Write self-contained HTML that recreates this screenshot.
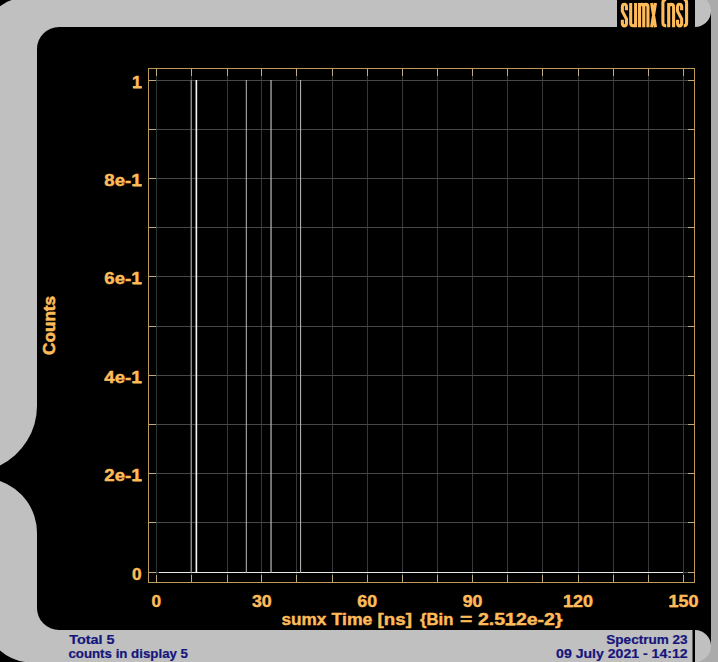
<!DOCTYPE html>
<html><head><meta charset="utf-8"><title>sumx (ns)</title>
<style>html,body{margin:0;padding:0;background:#000;}body{width:718px;height:662px;overflow:hidden;font-family:"Liberation Sans",sans-serif;}svg{display:block;}</style>
</head><body>
<svg width="718" height="662" viewBox="0 0 718 662" shape-rendering="auto">
<rect width="718" height="662" fill="#000"/>
<rect x="711" y="0" width="7" height="662" fill="#ababab"/>
<path d="M11.7,0 L617,0 L617,27 L59,27 A22,22 0 0 0 37,49 L37,405.6 A67,67 0 0 1 0,465.6 L0,6.3 A30,30 0 0 1 11.7,0 Z" fill="#c0c0c0"/>
<path d="M0,481 A55,55 0 0 1 37,533 L37,608 A22,22 0 0 0 59,630 L692.5,630 L692.5,662 L25,662 A48,48 0 0 1 0,650.5 Z" fill="#c0c0c0"/>
<rect x="695" y="0" width="23" height="12.5" fill="#ababab"/>
<rect x="695" y="645" width="23" height="17" fill="#ababab"/>
<path d="M695,-5 A16,16 0 0 1 695,27 Z" fill="#c0c0c0"/>
<path d="M695,630 A16,16 0 0 1 695,662 Z" fill="#c0c0c0"/>
<line x1="156.5" y1="68" x2="156.5" y2="582" stroke="#2a3434" stroke-width="1"/>
<line x1="191.5" y1="68" x2="191.5" y2="582" stroke="#383838" stroke-width="1"/>
<line x1="227.5" y1="68" x2="227.5" y2="582" stroke="#383838" stroke-width="1"/>
<line x1="261.5" y1="68" x2="261.5" y2="582" stroke="#383838" stroke-width="1"/>
<line x1="296.5" y1="68" x2="296.5" y2="582" stroke="#383838" stroke-width="1"/>
<line x1="332.5" y1="68" x2="332.5" y2="582" stroke="#383838" stroke-width="1"/>
<line x1="367.5" y1="68" x2="367.5" y2="582" stroke="#383838" stroke-width="1"/>
<line x1="402.5" y1="68" x2="402.5" y2="582" stroke="#383838" stroke-width="1"/>
<line x1="437.5" y1="68" x2="437.5" y2="582" stroke="#383838" stroke-width="1"/>
<line x1="472.5" y1="68" x2="472.5" y2="582" stroke="#383838" stroke-width="1"/>
<line x1="507.5" y1="68" x2="507.5" y2="582" stroke="#383838" stroke-width="1"/>
<line x1="542.5" y1="68" x2="542.5" y2="582" stroke="#383838" stroke-width="1"/>
<line x1="578.5" y1="68" x2="578.5" y2="582" stroke="#383838" stroke-width="1"/>
<line x1="613.5" y1="68" x2="613.5" y2="582" stroke="#383838" stroke-width="1"/>
<line x1="648.5" y1="68" x2="648.5" y2="582" stroke="#383838" stroke-width="1"/>
<line x1="683.5" y1="68" x2="683.5" y2="582" stroke="#383838" stroke-width="1"/>
<line x1="148" y1="80.5" x2="694" y2="80.5" stroke="#474747" stroke-width="1"/>
<line x1="148" y1="129.5" x2="694" y2="129.5" stroke="#474747" stroke-width="1"/>
<line x1="148" y1="178.5" x2="694" y2="178.5" stroke="#474747" stroke-width="1"/>
<line x1="148" y1="227.5" x2="694" y2="227.5" stroke="#474747" stroke-width="1"/>
<line x1="148" y1="276.5" x2="694" y2="276.5" stroke="#474747" stroke-width="1"/>
<line x1="148" y1="326.5" x2="694" y2="326.5" stroke="#474747" stroke-width="1"/>
<line x1="148" y1="375.5" x2="694" y2="375.5" stroke="#474747" stroke-width="1"/>
<line x1="148" y1="424.5" x2="694" y2="424.5" stroke="#474747" stroke-width="1"/>
<line x1="148" y1="473.5" x2="694" y2="473.5" stroke="#474747" stroke-width="1"/>
<line x1="148" y1="522.5" x2="694" y2="522.5" stroke="#474747" stroke-width="1"/>
<line x1="148" y1="572.5" x2="694" y2="572.5" stroke="#474747" stroke-width="1"/>
<line x1="156.5" y1="69" x2="156.5" y2="76" stroke="#bcab80" stroke-width="1"/>
<line x1="156.5" y1="575" x2="156.5" y2="582" stroke="#bcab80" stroke-width="1"/>
<line x1="191.5" y1="69" x2="191.5" y2="76" stroke="#bcab80" stroke-width="1"/>
<line x1="191.5" y1="575" x2="191.5" y2="582" stroke="#bcab80" stroke-width="1"/>
<line x1="227.5" y1="69" x2="227.5" y2="76" stroke="#bcab80" stroke-width="1"/>
<line x1="227.5" y1="575" x2="227.5" y2="582" stroke="#bcab80" stroke-width="1"/>
<line x1="261.5" y1="69" x2="261.5" y2="76" stroke="#bcab80" stroke-width="1"/>
<line x1="261.5" y1="575" x2="261.5" y2="582" stroke="#bcab80" stroke-width="1"/>
<line x1="296.5" y1="69" x2="296.5" y2="76" stroke="#bcab80" stroke-width="1"/>
<line x1="296.5" y1="575" x2="296.5" y2="582" stroke="#bcab80" stroke-width="1"/>
<line x1="332.5" y1="69" x2="332.5" y2="76" stroke="#bcab80" stroke-width="1"/>
<line x1="332.5" y1="575" x2="332.5" y2="582" stroke="#bcab80" stroke-width="1"/>
<line x1="367.5" y1="69" x2="367.5" y2="76" stroke="#bcab80" stroke-width="1"/>
<line x1="367.5" y1="575" x2="367.5" y2="582" stroke="#bcab80" stroke-width="1"/>
<line x1="402.5" y1="69" x2="402.5" y2="76" stroke="#bcab80" stroke-width="1"/>
<line x1="402.5" y1="575" x2="402.5" y2="582" stroke="#bcab80" stroke-width="1"/>
<line x1="437.5" y1="69" x2="437.5" y2="76" stroke="#bcab80" stroke-width="1"/>
<line x1="437.5" y1="575" x2="437.5" y2="582" stroke="#bcab80" stroke-width="1"/>
<line x1="472.5" y1="69" x2="472.5" y2="76" stroke="#bcab80" stroke-width="1"/>
<line x1="472.5" y1="575" x2="472.5" y2="582" stroke="#bcab80" stroke-width="1"/>
<line x1="507.5" y1="69" x2="507.5" y2="76" stroke="#bcab80" stroke-width="1"/>
<line x1="507.5" y1="575" x2="507.5" y2="582" stroke="#bcab80" stroke-width="1"/>
<line x1="542.5" y1="69" x2="542.5" y2="76" stroke="#bcab80" stroke-width="1"/>
<line x1="542.5" y1="575" x2="542.5" y2="582" stroke="#bcab80" stroke-width="1"/>
<line x1="578.5" y1="69" x2="578.5" y2="76" stroke="#bcab80" stroke-width="1"/>
<line x1="578.5" y1="575" x2="578.5" y2="582" stroke="#bcab80" stroke-width="1"/>
<line x1="613.5" y1="69" x2="613.5" y2="76" stroke="#bcab80" stroke-width="1"/>
<line x1="613.5" y1="575" x2="613.5" y2="582" stroke="#bcab80" stroke-width="1"/>
<line x1="648.5" y1="69" x2="648.5" y2="76" stroke="#bcab80" stroke-width="1"/>
<line x1="648.5" y1="575" x2="648.5" y2="582" stroke="#bcab80" stroke-width="1"/>
<line x1="683.5" y1="69" x2="683.5" y2="76" stroke="#bcab80" stroke-width="1"/>
<line x1="683.5" y1="575" x2="683.5" y2="582" stroke="#bcab80" stroke-width="1"/>
<line x1="149" y1="80.5" x2="156" y2="80.5" stroke="#bcab80" stroke-width="1"/>
<line x1="688" y1="80.5" x2="694" y2="80.5" stroke="#bcab80" stroke-width="1"/>
<line x1="149" y1="129.5" x2="156" y2="129.5" stroke="#bcab80" stroke-width="1"/>
<line x1="688" y1="129.5" x2="694" y2="129.5" stroke="#bcab80" stroke-width="1"/>
<line x1="149" y1="178.5" x2="156" y2="178.5" stroke="#bcab80" stroke-width="1"/>
<line x1="688" y1="178.5" x2="694" y2="178.5" stroke="#bcab80" stroke-width="1"/>
<line x1="149" y1="227.5" x2="156" y2="227.5" stroke="#bcab80" stroke-width="1"/>
<line x1="688" y1="227.5" x2="694" y2="227.5" stroke="#bcab80" stroke-width="1"/>
<line x1="149" y1="276.5" x2="156" y2="276.5" stroke="#bcab80" stroke-width="1"/>
<line x1="688" y1="276.5" x2="694" y2="276.5" stroke="#bcab80" stroke-width="1"/>
<line x1="149" y1="326.5" x2="156" y2="326.5" stroke="#bcab80" stroke-width="1"/>
<line x1="688" y1="326.5" x2="694" y2="326.5" stroke="#bcab80" stroke-width="1"/>
<line x1="149" y1="375.5" x2="156" y2="375.5" stroke="#bcab80" stroke-width="1"/>
<line x1="688" y1="375.5" x2="694" y2="375.5" stroke="#bcab80" stroke-width="1"/>
<line x1="149" y1="424.5" x2="156" y2="424.5" stroke="#bcab80" stroke-width="1"/>
<line x1="688" y1="424.5" x2="694" y2="424.5" stroke="#bcab80" stroke-width="1"/>
<line x1="149" y1="473.5" x2="156" y2="473.5" stroke="#bcab80" stroke-width="1"/>
<line x1="688" y1="473.5" x2="694" y2="473.5" stroke="#bcab80" stroke-width="1"/>
<line x1="149" y1="522.5" x2="156" y2="522.5" stroke="#bcab80" stroke-width="1"/>
<line x1="688" y1="522.5" x2="694" y2="522.5" stroke="#bcab80" stroke-width="1"/>
<line x1="149" y1="572.5" x2="156" y2="572.5" stroke="#bcab80" stroke-width="1"/>
<line x1="688" y1="572.5" x2="694" y2="572.5" stroke="#bcab80" stroke-width="1"/>
<rect x="148.5" y="68.5" width="546" height="514" fill="none" stroke="#bd9a55" stroke-width="1"/>
<line x1="159" y1="572.5" x2="683" y2="572.5" stroke="#e8e8e8" stroke-width="1"/>
<line x1="191.2" y1="80" x2="191.2" y2="573" stroke="#a0a0a0" stroke-width="1.2"/>
<line x1="246.3" y1="80" x2="246.3" y2="573" stroke="#bcbcbc" stroke-width="1"/>
<line x1="271.05" y1="80" x2="271.05" y2="573" stroke="#b4b4b4" stroke-width="1.25"/>
<line x1="300.6" y1="80" x2="300.6" y2="573" stroke="#bcbcbc" stroke-width="1"/>
<line x1="196.4" y1="80" x2="196.4" y2="573" stroke="#fff" stroke-width="1.1"/>
<line x1="196.3" y1="80" x2="196.3" y2="573" stroke="#fff" stroke-width="2.4" stroke-opacity="0.35"/>
<text x="141.5" y="88.2" font-family="Liberation Sans, sans-serif" font-weight="bold" font-size="17.1" fill="#fdbb5a" text-anchor="end" textLength="9.6" lengthAdjust="spacingAndGlyphs"  stroke="#fdbb5a" stroke-width="0.45" stroke-linejoin="round">1</text>
<text x="141.5" y="186.2" font-family="Liberation Sans, sans-serif" font-weight="bold" font-size="17.1" fill="#fdbb5a" text-anchor="end" textLength="37.2" lengthAdjust="spacingAndGlyphs"  stroke="#fdbb5a" stroke-width="0.45" stroke-linejoin="round">8e-1</text>
<text x="141.5" y="284.2" font-family="Liberation Sans, sans-serif" font-weight="bold" font-size="17.1" fill="#fdbb5a" text-anchor="end" textLength="37.2" lengthAdjust="spacingAndGlyphs"  stroke="#fdbb5a" stroke-width="0.45" stroke-linejoin="round">6e-1</text>
<text x="141.5" y="383.2" font-family="Liberation Sans, sans-serif" font-weight="bold" font-size="17.1" fill="#fdbb5a" text-anchor="end" textLength="37.2" lengthAdjust="spacingAndGlyphs"  stroke="#fdbb5a" stroke-width="0.45" stroke-linejoin="round">4e-1</text>
<text x="141.5" y="481.2" font-family="Liberation Sans, sans-serif" font-weight="bold" font-size="17.1" fill="#fdbb5a" text-anchor="end" textLength="37.2" lengthAdjust="spacingAndGlyphs"  stroke="#fdbb5a" stroke-width="0.45" stroke-linejoin="round">2e-1</text>
<text x="141.5" y="580.2" font-family="Liberation Sans, sans-serif" font-weight="bold" font-size="17.1" fill="#fdbb5a" text-anchor="end" textLength="9.6" lengthAdjust="spacingAndGlyphs"  stroke="#fdbb5a" stroke-width="0.45" stroke-linejoin="round">0</text>
<text x="156.4" y="607" font-family="Liberation Sans, sans-serif" font-weight="bold" font-size="17.1" fill="#fdbb5a" text-anchor="middle" textLength="9.6" lengthAdjust="spacingAndGlyphs"  stroke="#fdbb5a" stroke-width="0.45" stroke-linejoin="round">0</text>
<text x="261.8" y="607" font-family="Liberation Sans, sans-serif" font-weight="bold" font-size="17.1" fill="#fdbb5a" text-anchor="middle" textLength="19.8" lengthAdjust="spacingAndGlyphs"  stroke="#fdbb5a" stroke-width="0.45" stroke-linejoin="round">30</text>
<text x="367.2" y="607" font-family="Liberation Sans, sans-serif" font-weight="bold" font-size="17.1" fill="#fdbb5a" text-anchor="middle" textLength="19.8" lengthAdjust="spacingAndGlyphs"  stroke="#fdbb5a" stroke-width="0.45" stroke-linejoin="round">60</text>
<text x="472.6" y="607" font-family="Liberation Sans, sans-serif" font-weight="bold" font-size="17.1" fill="#fdbb5a" text-anchor="middle" textLength="19.8" lengthAdjust="spacingAndGlyphs"  stroke="#fdbb5a" stroke-width="0.45" stroke-linejoin="round">90</text>
<text x="578.0" y="607" font-family="Liberation Sans, sans-serif" font-weight="bold" font-size="17.1" fill="#fdbb5a" text-anchor="middle" textLength="30.0" lengthAdjust="spacingAndGlyphs"  stroke="#fdbb5a" stroke-width="0.45" stroke-linejoin="round">120</text>
<text x="683.4" y="607" font-family="Liberation Sans, sans-serif" font-weight="bold" font-size="17.1" fill="#fdbb5a" text-anchor="middle" textLength="30.0" lengthAdjust="spacingAndGlyphs"  stroke="#fdbb5a" stroke-width="0.45" stroke-linejoin="round">150</text>
<text x="281.5" y="625.4" font-family="Liberation Sans, sans-serif" font-weight="bold" font-size="17.1" fill="#fdbb5a" text-anchor="start" textLength="44.9" lengthAdjust="spacingAndGlyphs"  stroke="#fdbb5a" stroke-width="0.45" stroke-linejoin="round">sumx</text>
<text x="331.6" y="625.4" font-family="Liberation Sans, sans-serif" font-weight="bold" font-size="17.1" fill="#fdbb5a" text-anchor="start" textLength="40.8" lengthAdjust="spacingAndGlyphs"  stroke="#fdbb5a" stroke-width="0.45" stroke-linejoin="round">Time</text>
<text x="377.6" y="625.4" font-family="Liberation Sans, sans-serif" font-weight="bold" font-size="17.1" fill="#fdbb5a" text-anchor="start" textLength="34.4" lengthAdjust="spacingAndGlyphs"  stroke="#fdbb5a" stroke-width="0.45" stroke-linejoin="round">[ns]</text>
<text x="420.0" y="625.4" font-family="Liberation Sans, sans-serif" font-weight="bold" font-size="17.1" fill="#fdbb5a" text-anchor="start" textLength="33.4" lengthAdjust="spacingAndGlyphs"  stroke="#fdbb5a" stroke-width="0.45" stroke-linejoin="round">{Bin</text>
<text x="460.1" y="625.4" font-family="Liberation Sans, sans-serif" font-weight="bold" font-size="17.1" fill="#fdbb5a" text-anchor="start" textLength="12.3" lengthAdjust="spacingAndGlyphs"  stroke="#fdbb5a" stroke-width="0.45" stroke-linejoin="round">=</text>
<text x="477.9" y="625.4" font-family="Liberation Sans, sans-serif" font-weight="bold" font-size="17.1" fill="#fdbb5a" text-anchor="start" textLength="84.7" lengthAdjust="spacingAndGlyphs"  stroke="#fdbb5a" stroke-width="0.45" stroke-linejoin="round">2.512e-2}</text>
<text transform="translate(54.8,354.9) rotate(-90)" font-family="Liberation Sans, sans-serif" font-weight="bold" font-size="17.1" fill="#fdbb5a" stroke="#fdbb5a" stroke-width="0.6" stroke-linejoin="round" textLength="59" lengthAdjust="spacingAndGlyphs">Counts</text>
<rect x="133.2" y="86.3" width="8.6" height="2.1" fill="#fdbb5a"/>
<rect x="133.2" y="184.3" width="8.6" height="2.1" fill="#fdbb5a"/>
<rect x="133.2" y="282.3" width="8.6" height="2.1" fill="#fdbb5a"/>
<rect x="133.2" y="381.3" width="8.6" height="2.1" fill="#fdbb5a"/>
<rect x="133.2" y="479.3" width="8.6" height="2.1" fill="#fdbb5a"/>
<rect x="564.6" y="605.1" width="8.7" height="2.1" fill="#fdbb5a"/>
<rect x="669.6" y="605.1" width="8.7" height="2.1" fill="#fdbb5a"/>
<rect x="505.6" y="623.5" width="9.7" height="2.1" fill="#fdbb5a"/>
<text x="69.2" y="643.7" font-family="Liberation Sans, sans-serif" font-weight="bold" font-size="12.2" fill="#15157c" text-anchor="start" textLength="45.3" lengthAdjust="spacingAndGlyphs"  stroke="#15157c" stroke-width="0.2" stroke-linejoin="round">Total 5</text>
<text x="68.4" y="658.2" font-family="Liberation Sans, sans-serif" font-weight="bold" font-size="12.2" fill="#15157c" text-anchor="start" textLength="119.6" lengthAdjust="spacingAndGlyphs"  stroke="#15157c" stroke-width="0.2" stroke-linejoin="round">counts in display 5</text>
<text x="687.6" y="643.7" font-family="Liberation Sans, sans-serif" font-weight="bold" font-size="12.2" fill="#15157c" text-anchor="end" textLength="81.3" lengthAdjust="spacingAndGlyphs"  stroke="#15157c" stroke-width="0.2" stroke-linejoin="round">Spectrum 23</text>
<text x="687.6" y="658.2" font-family="Liberation Sans, sans-serif" font-weight="bold" font-size="12.2" fill="#15157c" text-anchor="end" textLength="131.5" lengthAdjust="spacingAndGlyphs"  stroke="#15157c" stroke-width="0.2" stroke-linejoin="round">09 July 2021 - 14:12</text>
<path d="M626.4499999999999,10.2 L626.4499999999999,7 Q626.4499999999999,4.3 624.4,4.3 Q622.35,4.3 622.35,7 L622.35,11.2 L626.4499999999999,19 L626.4499999999999,23.3 Q626.4499999999999,25.9 624.4,25.9 Q622.35,25.9 622.35,23.3 L622.35,19.8 M630.7,2.9 L630.7,23 Q630.7,25.8 633.15,25.8 Q635.6,25.8 635.6,23 M635.6,2.9 L635.6,27.3 M639.55,2.9 L639.55,27.3 M639.55,7.2 Q639.55,4.4 641.65,4.4 Q643.75,4.4 643.75,7.2 L643.75,27.3 M643.75,7.2 Q643.75,4.4 645.85,4.4 Q647.95,4.4 647.95,7.2 L647.95,27.3 M651.6,2.9 L655.5,27.3 M655.5,2.9 L651.6,27.3 M666.2,-0.6 Q662.9,-0.6 662.9,3 L662.9,22.8 Q662.9,25.9 666.2,25.9 M668.7,2.9 L668.7,27.3 M668.7,7.2 Q668.7,4.4 671.1500000000001,4.4 Q673.6,4.4 673.6,7.2 L673.6,27.3 M681.65,10.2 L681.65,7 Q681.65,4.3 679.6,4.3 Q677.5500000000001,4.3 677.5500000000001,7 L677.5500000000001,11.2 L681.65,19 L681.65,23.3 Q681.65,25.9 679.6,25.9 Q677.5500000000001,25.9 677.5500000000001,23.3 L677.5500000000001,19.8 M683.7,-0.6 Q686.6,-0.6 686.6,3 L686.6,22.8 Q686.6,25.9 683.7,25.9" fill="none" stroke="#fdbb5a" stroke-width="3.1" stroke-linejoin="round" stroke-linecap="butt"/>
</svg>
</body></html>
